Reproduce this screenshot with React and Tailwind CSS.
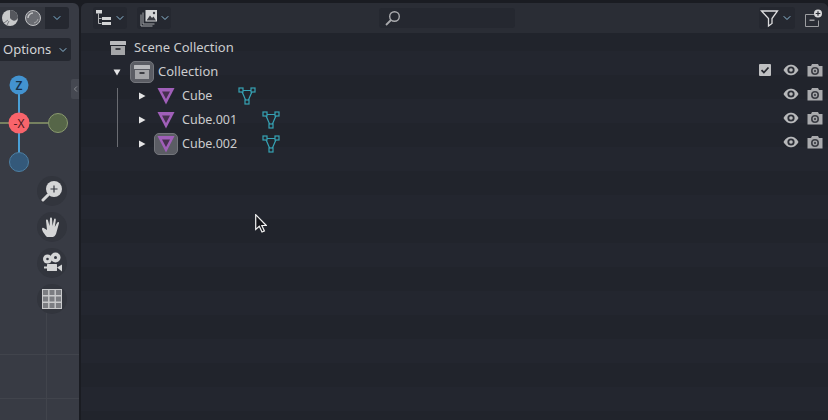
import React from 'react';
import { ChevronDown, ChevronLeft } from 'lucide-react';

const Chevron = ({ className = '' }) => (
  <ChevronDown className={`w-[12px] h-[12px] ${className}`} strokeWidth={2} />
);

const CollectionIcon = () => (
  <svg width="18" height="16" viewBox="0 0 18 16">
    <rect x="1" y="1" width="16" height="4" rx="0.5" fill="#b9babd" />
    <path d="M2 6h14v9H2z" fill="#a4a5a8" />
    <rect x="6.5" y="8" width="5" height="2" fill="#3b3c42" />
  </svg>
);

const MeshObject = () => (
  <svg width="18" height="18" viewBox="0 0 18 18">
    <path d="M0.500 1h17L9 17.500z" fill="#a05fb9" />
    <path d="M5 4.500h8L9 12z" fill="#46304f" />
  </svg>
);

const MeshData = () => (
  <svg width="18" height="18" viewBox="0 0 18 18" fill="none" stroke="#36a3b5" strokeWidth="1.200">
    <path d="M3.500 3.500h11M3.500 3.500L8 14M14.500 3.500L10 14" />
    <rect x="1" y="1" width="4" height="4" fill="#22252e" />
    <rect x="13" y="1" width="4" height="4" fill="#22252e" />
    <rect x="7" y="13" width="4" height="4" fill="#22252e" />
  </svg>
);

const Eye = () => (
  <svg width="16" height="12" viewBox="0 0 16 12">
    <path d="M0.500 6C3 1.800 5.500 0.800 8 0.800s5 1 7.500 5.200C13 10.200 10.500 11.200 8 11.200S3 10.200 0.500 6z" fill="#b8b9bb" />
    <circle cx="8" cy="6" r="3.600" fill="#2b2e36" />
    <circle cx="8" cy="6" r="1.800" fill="#b8b9bb" />
  </svg>
);

const Camera = () => (
  <svg width="16" height="14" viewBox="0 0 16 14">
    <path d="M0.500 3h3.500l1-2h6l1 2h3.500v10.500H0.500z" fill="#a9aaad" />
    <circle cx="8" cy="8" r="4" fill="#3a3c43" />
    <circle cx="8" cy="8" r="2.400" fill="#a9aaad" />
    <circle cx="8" cy="8" r="1.200" fill="#4a4c52" />
  </svg>
);

const Restrict = ({ check }) => (
  <div className="flex items-center mt-[-4px]">
    {check && (
      <div className="w-[12px] h-[12px] mr-[12px] bg-[#bfc0c2] rounded-[1px] flex items-center justify-center">
        <svg width="10" height="10" viewBox="0 0 10 10" fill="none" stroke="#26282f" strokeWidth="1.800">
          <path d="M1.500 5.200l2.400 2.300 4.600-5" />
        </svg>
      </div>
    )}
    <Eye />
    <div className="w-[8px]" />
    <Camera />
  </div>
);

const Triangle = ({ down }) => (
  <svg width="8" height="8" viewBox="0 0 8 8">
    {down ? <path d="M0.500 1.500h7L4 7.500z" fill="#e4e4e5" /> : <path d="M1 0.500l6.500 3.500L1 7.500z" fill="#e4e4e5" />}
  </svg>
);

const objects = [
  { name: 'Cube', gap: 'w-[26px]', active: false },
  { name: 'Cube.001', gap: 'w-[25px]', active: false },
  { name: 'Cube.002', gap: 'w-[25px]', active: true },
];

const Gizmo = () => (
  <svg width="79" height="100" viewBox="0 0 79 100" className="absolute left-0 top-[70px]">
    <path d="M0 50h48" stroke="#8b9a6a" strokeWidth="1.500" />
    <path d="M19 12v76" stroke="#4a9fd6" strokeWidth="2" />
    <circle cx="19" cy="89" r="9.500" fill="#34597a" stroke="#4d7fa3" />
    <circle cx="58" cy="50" r="9.500" fill="#566648" stroke="#8a9a6e" />
    <circle cx="19" cy="12" r="9.500" fill="#4393d0" />
    <circle cx="19" cy="50" r="10.500" fill="#f8646b" />
    <text x="19" y="54.500" textAnchor="middle" fontSize="12" fontFamily="'Noto Sans', sans-serif" fill="#4a1a20">-X</text>
    <text x="19" y="16.500" textAnchor="middle" fontSize="12" fontWeight="600" fontFamily="'Noto Sans', sans-serif" fill="#17324a">Z</text>
  </svg>
);

const ToolBtn = ({ children }) => (
  <div className="w-[30px] h-[30px] rounded-full bg-[#32353d] flex items-center justify-center">{children}</div>
);

const Sphere = ({ shaded }) => (
  <svg width="18" height="18" viewBox="0 0 18 18">
    {shaded ? (
      <>
        <circle cx="9" cy="9" r="8" fill="#c9cacb" />
        <path d="M9 1a8 8 0 0 1 8 8c-2 3-5 4-8 0z" fill="#55575d" />
        <path d="M3 14l4-3M6 16l2-4" stroke="#77797e" />
      </>
    ) : (
      <>
        <circle cx="9" cy="9" r="7.500" fill="#6a6c72" stroke="#c2c3c5" />
        <path d="M4 9a5 5 0 0 1 5-5" fill="none" stroke="#c2c3c5" strokeWidth="1.500" />
        <path d="M14 10a5 5 0 0 1-4 4" fill="none" stroke="#a5a6a9" />
      </>
    )}
  </svg>
);

export default function App() {
  return (
    <div className="w-[828px] h-[420px] overflow-hidden flex bg-[#1a1c22] text-[#cbccce] text-[13px]" style={{ fontFamily: "'Noto Sans', sans-serif" }}>
      {/* viewport side */}
      <div className="w-[79px] mt-[3px] rounded-tr-[6px] bg-[#383b44] relative overflow-hidden shrink-0">
        <div className="absolute left-0 right-0 top-[351px] h-px bg-[#41444c]" />
        <div className="absolute left-0 right-0 top-[395px] h-px bg-[#41444c]" />
        <div className="absolute left-[46px] top-[300px] bottom-0 w-px bg-[#41444c]" />
        <div className="flex items-center mt-[4px] ml-[-2px]">
          <div className="flex h-[22px] w-[47px] bg-[#33363e] rounded-l-[3px] items-center justify-between pl-[3px] pr-[3px]">
            <Sphere shaded />
            <Sphere />
          </div>
          <div className="w-[24px] h-[22px] bg-[#252830] rounded-r-[3px] flex items-center justify-center text-[#7fb6d8]">
            <Chevron />
          </div>
        </div>
        <div className="mt-[9px] h-[23px] w-[71px] bg-[#252830] rounded-r-[3px] flex items-center pl-[3px] gap-[6px] text-[#d3d4d6]">
          <span>Options</span>
          <Chevron className="text-[#8fbcd8]" />
        </div>
        <Gizmo />
        <div className="absolute right-0 top-[76px] w-[8px] h-[20px] bg-[#454851] rounded-l-[2px] flex items-center justify-center text-[#b8b9bc]">
          <ChevronLeft className="w-[9px] h-[12px] shrink-0" strokeWidth={1.500} />
        </div>
        <div className="absolute left-[37px] top-[173px] flex flex-col gap-[6px]">
          <ToolBtn>
            <svg width="22" height="22" viewBox="0 0 22 22">
              <circle cx="13" cy="9" r="8" fill="#d4d5d6" />
              <path d="M7 15l-5 5" stroke="#d4d5d6" strokeWidth="3" strokeLinecap="round" />
              <path d="M9.500 9h7M13 5.500v7" stroke="#33363f" strokeWidth="1.200" />
            </svg>
          </ToolBtn>
          <ToolBtn>
            <svg width="22" height="22" viewBox="0 0 22 22">
              <path d="M6 21c-2-2-5-6-5-8 0-1.500 1.500-1.500 2.500-.5L6 14 5 4.500c0-1.500 1.800-1.500 2 0L8.500 10 9 2.500c0-1.500 2-1.500 2 0l.5 7.500L13 3.500c.3-1.500 2-1 1.800.5l-1 7 2.500-4.500c.7-1.200 2.200-.5 1.700.8L15 18c-1 2-2 3-3.500 3z" fill="#d4d5d6" />
            </svg>
          </ToolBtn>
          <ToolBtn>
            <svg width="22" height="22" viewBox="0 0 22 22">
              <circle cx="6.500" cy="7" r="4.500" fill="#d4d5d6" />
              <circle cx="14.500" cy="5.500" r="5" fill="#d4d5d6" />
              <circle cx="6.500" cy="7" r="1.300" fill="#33363f" />
              <circle cx="14.500" cy="5.500" r="1.500" fill="#33363f" />
              <rect x="6" y="12" width="10" height="7" rx="0.500" fill="#d4d5d6" />
              <path d="M3 14.500h3v2H3zM16 15.500l5-3v7z" fill="#d4d5d6" />
            </svg>
          </ToolBtn>
          <ToolBtn>
            <svg width="20" height="20" viewBox="0 0 20 20" fill="none">
              <rect x="0.500" y="0.500" width="19" height="19" fill="#7b7d82" stroke="#c8c9cb" />
              <path d="M6.800 0.500v19M13.200 0.500v19M0.500 6.800h19M0.500 13.200h19" stroke="#c8c9cb" strokeWidth="1.400" />
            </svg>
          </ToolBtn>
        </div>
      </div>

      {/* outliner */}
      <div className="w-[2px] shrink-0" />
      <div className="flex-1 mt-[3px] rounded-t-[6px] bg-[repeating-linear-gradient(180deg,#23262f_0,#23262f_24px,#21242c_24px,#21242c_48px)] flex flex-col overflow-hidden">
        <div className="h-[30px] bg-[#2a2d35] flex items-center pl-[12px] pr-[4px] shrink-0">
          <div className="w-[34px] h-[22px] bg-[#252830] rounded-[3px] flex items-center pl-[2px] gap-[1px] text-[#8fbcd8]">
            <svg width="18" height="18" viewBox="0 0 18 18">
              <rect x="1" y="1" width="6" height="3.500" fill="#d4d5d6" />
              <path d="M3.500 4.500v10h3M3.500 9.500h3" stroke="#b5b6b8" fill="none" />
              <rect x="7" y="8" width="9" height="3" fill="#d4d5d6" />
              <rect x="7" y="13" width="9" height="3" fill="#d4d5d6" />
            </svg>
            <Chevron />
          </div>
          <div className="ml-[10px] w-[34px] h-[22px] bg-[#252830] rounded-[3px] flex items-center pl-[3px] gap-[1px] text-[#8fbcd8]">
            <svg width="18" height="18" viewBox="0 0 18 18">
              <path d="M1 5.500v11.500h11.500" fill="none" stroke="#a5a6a9" />
              <path d="M3 3.500v11.500h11.500" fill="none" stroke="#a5a6a9" />
              <rect x="5.500" y="1" width="11.500" height="11.500" fill="#d4d5d6" />
              <path d="M6.500 11.500l3.500-5 2 2.500 1.500-1.500 2.500 4z" fill="#3b3d44" />
              <circle cx="14" cy="4" r="1.200" fill="#3b3d44" />
            </svg>
            <Chevron />
          </div>
          <div className="ml-[208px] w-[136px] h-[20px] bg-[#252830] rounded-[3px] flex items-center pl-[5px]">
            <svg width="17" height="17" viewBox="0 0 17 17" fill="none" stroke="#a9aaad" strokeWidth="1.400">
              <circle cx="10.500" cy="6.500" r="4.800" />
              <path d="M7 10l-5 5" strokeWidth="1.800" />
            </svg>
          </div>
          <div className="ml-auto w-[36px] h-[22px] bg-[#252830] rounded-[3px] flex items-center pl-[1px] text-[#8fbcd8]">
            <svg width="19" height="19" viewBox="0 0 19 19" fill="none" stroke="#dcdcde" strokeWidth="1.300">
              <path d="M1.500 2h16L12 9.500v5L8.500 17V9.500z" />
            </svg>
            <Chevron className="ml-[2px]" />
          </div>
          <div className="ml-[7px] w-[22px] h-[22px] flex items-center justify-center">
            <svg width="19" height="19" viewBox="0 0 19 19">
              <path d="M1.500 5.500h9M1.500 5.500v12h13v-6" fill="none" stroke="#9d9ea1" />
              <rect x="5.500" y="10.500" width="5" height="1.500" fill="#9d9ea1" />
              <circle cx="14" cy="4.500" r="4" fill="#d8d8da" />
              <path d="M11.700 4.500h4.600M14 2.200v4.600" stroke="#2a2d35" strokeWidth="1.200" />
            </svg>
          </div>
        </div>

        <div className="relative flex flex-col pt-[3px]">
          <div className="h-[24px] flex items-center pl-[28px]">
            <CollectionIcon />
            <span className="ml-[7px]">Scene Collection</span>
          </div>
          <div className="h-[24px] flex items-center pl-[32px] pr-[5px]">
            <Triangle down />
            <div className="ml-[9px] w-[24px] h-[22px] rounded-[5px] bg-[#5b5d64] border border-[#74767c] flex items-center justify-center">
              <CollectionIcon />
            </div>
            <span className="ml-[4px]">Collection</span>
            <div className="ml-auto"><Restrict check /></div>
          </div>
          {objects.map((o) => (
            <div key={o.name} className="h-[24px] flex items-center pl-[57px] pr-[5px]">
              <Triangle />
              <div className={`ml-[8px] w-[24px] h-[22px] rounded-[5px] flex items-center justify-center ${o.active ? 'bg-[#5b5d64] border border-[#74767c]' : ''}`}>
                <MeshObject />
              </div>
              <span className="ml-[4px] text-[12.5px]">{o.name}</span>
              <div className={`${o.gap} shrink-0`} />
              <MeshData />
              <div className="ml-auto"><Restrict /></div>
            </div>
          ))}
          <div className="absolute left-[36px] top-[55px] w-px h-[59px] bg-[#6a6c72]" />
        </div>

        <div className="absolute left-[255px] top-[214px]">
          <svg width="12" height="19" viewBox="0 0 12 19">
            <path d="M0.700 0.700v14.800l3.600-3.300 2.700 5.800 2.400-1.100-2.600-5.400h4.500z" fill="#14151a" stroke="#f0f0f0" strokeWidth="1.200" />
          </svg>
        </div>
      </div>
    </div>
  );
}
